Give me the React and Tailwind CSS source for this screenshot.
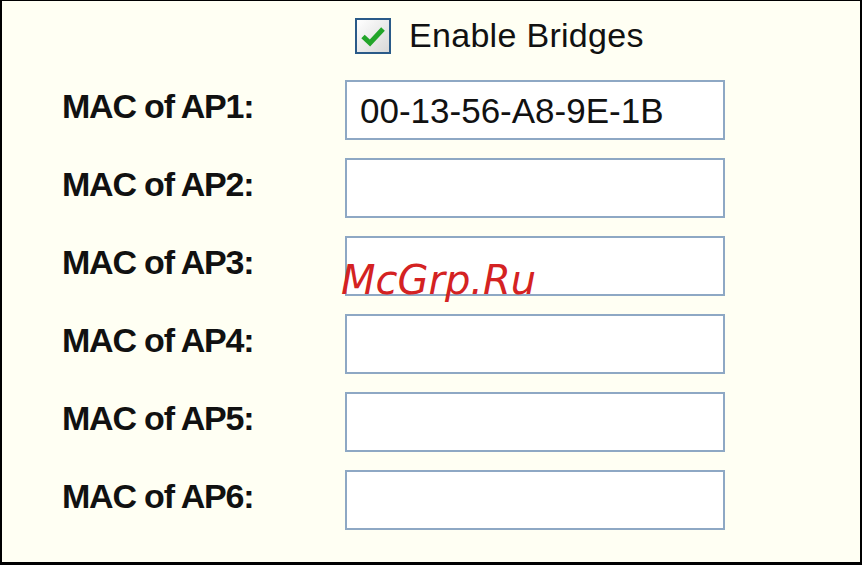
export default function App() {
  const rows = [
    { label: 'MAC of AP1:', value: '00-13-56-A8-9E-1B' },
    { label: 'MAC of AP2:', value: '' },
    { label: 'MAC of AP3:', value: '' },
    { label: 'MAC of AP4:', value: '' },
    { label: 'MAC of AP5:', value: '' },
    { label: 'MAC of AP6:', value: '' },
  ];

  return (
    <div className="relative w-[862px] h-[565px] bg-[#fffff3] border-t border-l-2 border-r-2 border-b-[3px] border-black font-['Liberation_Sans',Arial,sans-serif] text-[#111]">
      <div className="pl-[60px] pt-[17px]">
        <div className="flex items-center h-[36px] ml-[293px]">
          <div className="w-[36px] h-[36px] border-2 border-[#2a5a88] bg-gradient-to-br from-white to-[#d8d8d8] flex items-center justify-center">
            <svg width="26" height="24" viewBox="0 0 26 24">
              <path d="M3 12.5 L10 19 L23 5" fill="none" stroke="#22a52a" strokeWidth="5" strokeLinejoin="miter" />
            </svg>
          </div>
          <span className="ml-[18px] text-[34px] tracking-[0.3px] leading-none -mt-[3px]">Enable Bridges</span>
        </div>

        <div className="mt-[26px] flex flex-col gap-[18px]">
          {rows.map((r) => (
            <div key={r.label} className="flex items-center">
              <div className="w-[283px] text-[34px] font-bold tracking-[-1.2px] leading-none -mt-[8px]">{r.label}</div>
              <div className="w-[380px] h-[60px] border-2 border-[#8ea8c4] bg-white flex items-center pl-[13px] text-[35px] leading-none">
                {r.value}
              </div>
            </div>
          ))}
        </div>
      </div>

      <div className="absolute left-[339px] top-[259px] text-[40px] italic text-[#d42222] font-['DejaVu_Sans',sans-serif] leading-none">
        McGrp.Ru
      </div>
    </div>
  );
}
